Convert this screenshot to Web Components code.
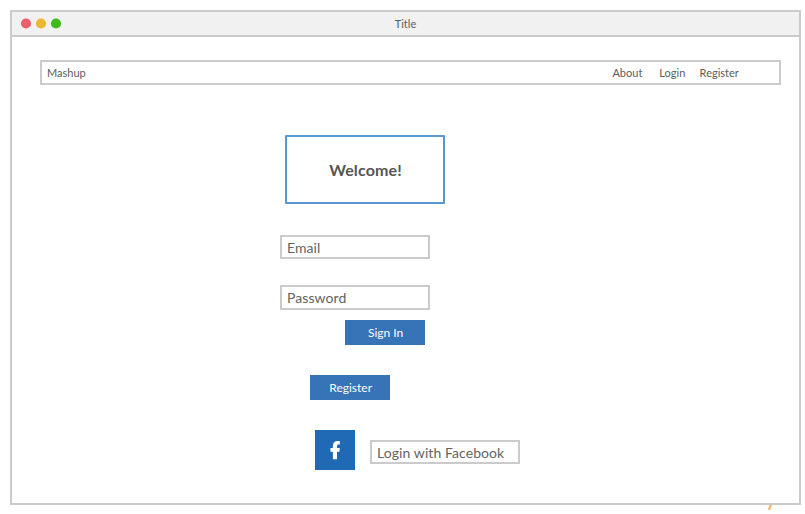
<!DOCTYPE html>
<html lang="en">
<head>
<meta charset="utf-8">
<title>Title</title>
<style>
html, body { margin: 0; height: 100%; background: #fff; overflow: hidden; }
body { font-family: Lato, "Liberation Sans", sans-serif; color: #5c5c5c; }
</style>
</head>
<body>
<mock-app></mock-app>
<script>
function define(name, markup) {
  const template = document.createElement('template');
  template.innerHTML = '<style>*{box-sizing:border-box}</style>' + markup;
  customElements.define(name, class extends HTMLElement {
    constructor() {
      super();
      this.attachShadow({ mode: 'open' }).append(template.content.cloneNode(true));
    }
  });
}

define('mock-window', `
<style>
:host { box-sizing: border-box; display: flex; flex-direction: column; width: 791px; height: 495px; border: 2px solid #cbcbcb; background: #fff; }
header { flex: none; height: 25px; display: grid; grid-template-columns: 1fr auto 1fr; align-items: center; background: #f1f1f1; border-bottom: 2px solid #cbcbcb; font-size: 11px; line-height: 23px; }
svg { display: block; margin-left: 8px; }
main { flex: 1; padding: 23px 18px 0 28px; }
</style>
<header><svg width="44" height="12"><circle cx="6" cy="5.5" r="5.1" fill="#e95f6a"/><circle cx="21" cy="5.5" r="5.1" fill="#ecb731"/><circle cx="36" cy="5.5" r="5.1" fill="#3dbb1b"/></svg><slot name="title"></slot><span></span></header>
<main><slot></slot></main>`);

define('mock-nav', `
<style>
:host { box-sizing: border-box; display: flex; align-items: center; height: 25px; border: 2px solid #cbcbcb; padding: 0 40.2px 0 5px; font-size: 11px; line-height: 21px; }
nav { display: flex; margin-left: auto; }
::slotted(a:nth-of-type(2)) { margin-left: 17px; }
::slotted(a:nth-of-type(3)) { margin-left: 14.3px; }
</style>
<slot name="brand"></slot><nav><slot></slot></nav>`);

define('mock-banner', `
<style>
:host { box-sizing: border-box; display: grid; place-items: center; width: 160px; height: 69px; border: 2px solid #5b97cf; border-radius: 1px; font-size: 16px; font-weight: 700; letter-spacing: .14px; line-height: 20px; color: #555; padding-left: 1px; }
</style>
<slot></slot>`);

define('mock-field', `
<style>
:host { box-sizing: border-box; display: flex; align-items: center; width: 150px; height: 24px; border: 2px solid #cbcbcb; padding: 1px 0 0 5px; font-size: 14px; letter-spacing: .08px; line-height: 19px; color: #636363; white-space: nowrap; }
</style>
<slot></slot>`);

define('mock-button', `
<style>
:host { box-sizing: border-box; display: flex; align-items: center; justify-content: center; width: 80px; height: 25px; padding-left: 1.3px; background: #3673b7; color: #fff; font-size: 12px; line-height: 25px; }
</style>
<slot></slot>`);

define('facebook-tile', `
<style>
:host { display: block; width: 40px; height: 40px; background: #2069b4; }
svg { display: block; }
</style>
<svg width="40" height="40" viewBox="0 0 40 40"><path fill="#fff" d="M17.9 29.3V21.7H15.4V18.1H17.9V16C17.9 12.7 19.8 11 22.5 11H24.8V14.4H23.4C22.4 14.4 22 14.9 22 15.9V18.1H24.8L24.4 21.7H22V29.3Z"/></svg>`);

define('mock-app', `
<style>
:host { display: block; padding: 10px 0 0 10px; }
.login { display: flex; flex-direction: column; align-items: flex-start; padding-left: 240px; }
mock-banner { margin: 50px 0 31px 5px; }
.password { height: 25px; margin: 26px 0 10px; padding-top: 0; line-height: 20px; }
.signin { margin-left: 65px; }
.register { margin: 30px 0 30px 30px; }
.social { display: flex; gap: 15px; align-items: flex-start; margin-left: 35px; }
.social mock-field { margin-top: 10px; }
.mark { display: block; margin-left: 757px; }
</style>
<mock-window>
  <span slot="title">Title</span>
  <mock-nav><span slot="brand">Mashup</span><a>About</a><a>Login</a><a>Register</a></mock-nav>
  <section class="login">
    <mock-banner>Welcome!</mock-banner>
    <mock-field>Email</mock-field>
    <mock-field class="password">Password</mock-field>
    <mock-button class="signin">Sign In</mock-button>
    <mock-button class="register">Register</mock-button>
    <div class="social"><facebook-tile></facebook-tile><mock-field>Login with Facebook</mock-field></div>
  </section>
</mock-window>
<svg class="mark" width="8" height="5"><path d="M.7 5L2.6 0H5.2L3.2 5Z" fill="#f9b872"/></svg>`);
</script>
</body>
</html>
